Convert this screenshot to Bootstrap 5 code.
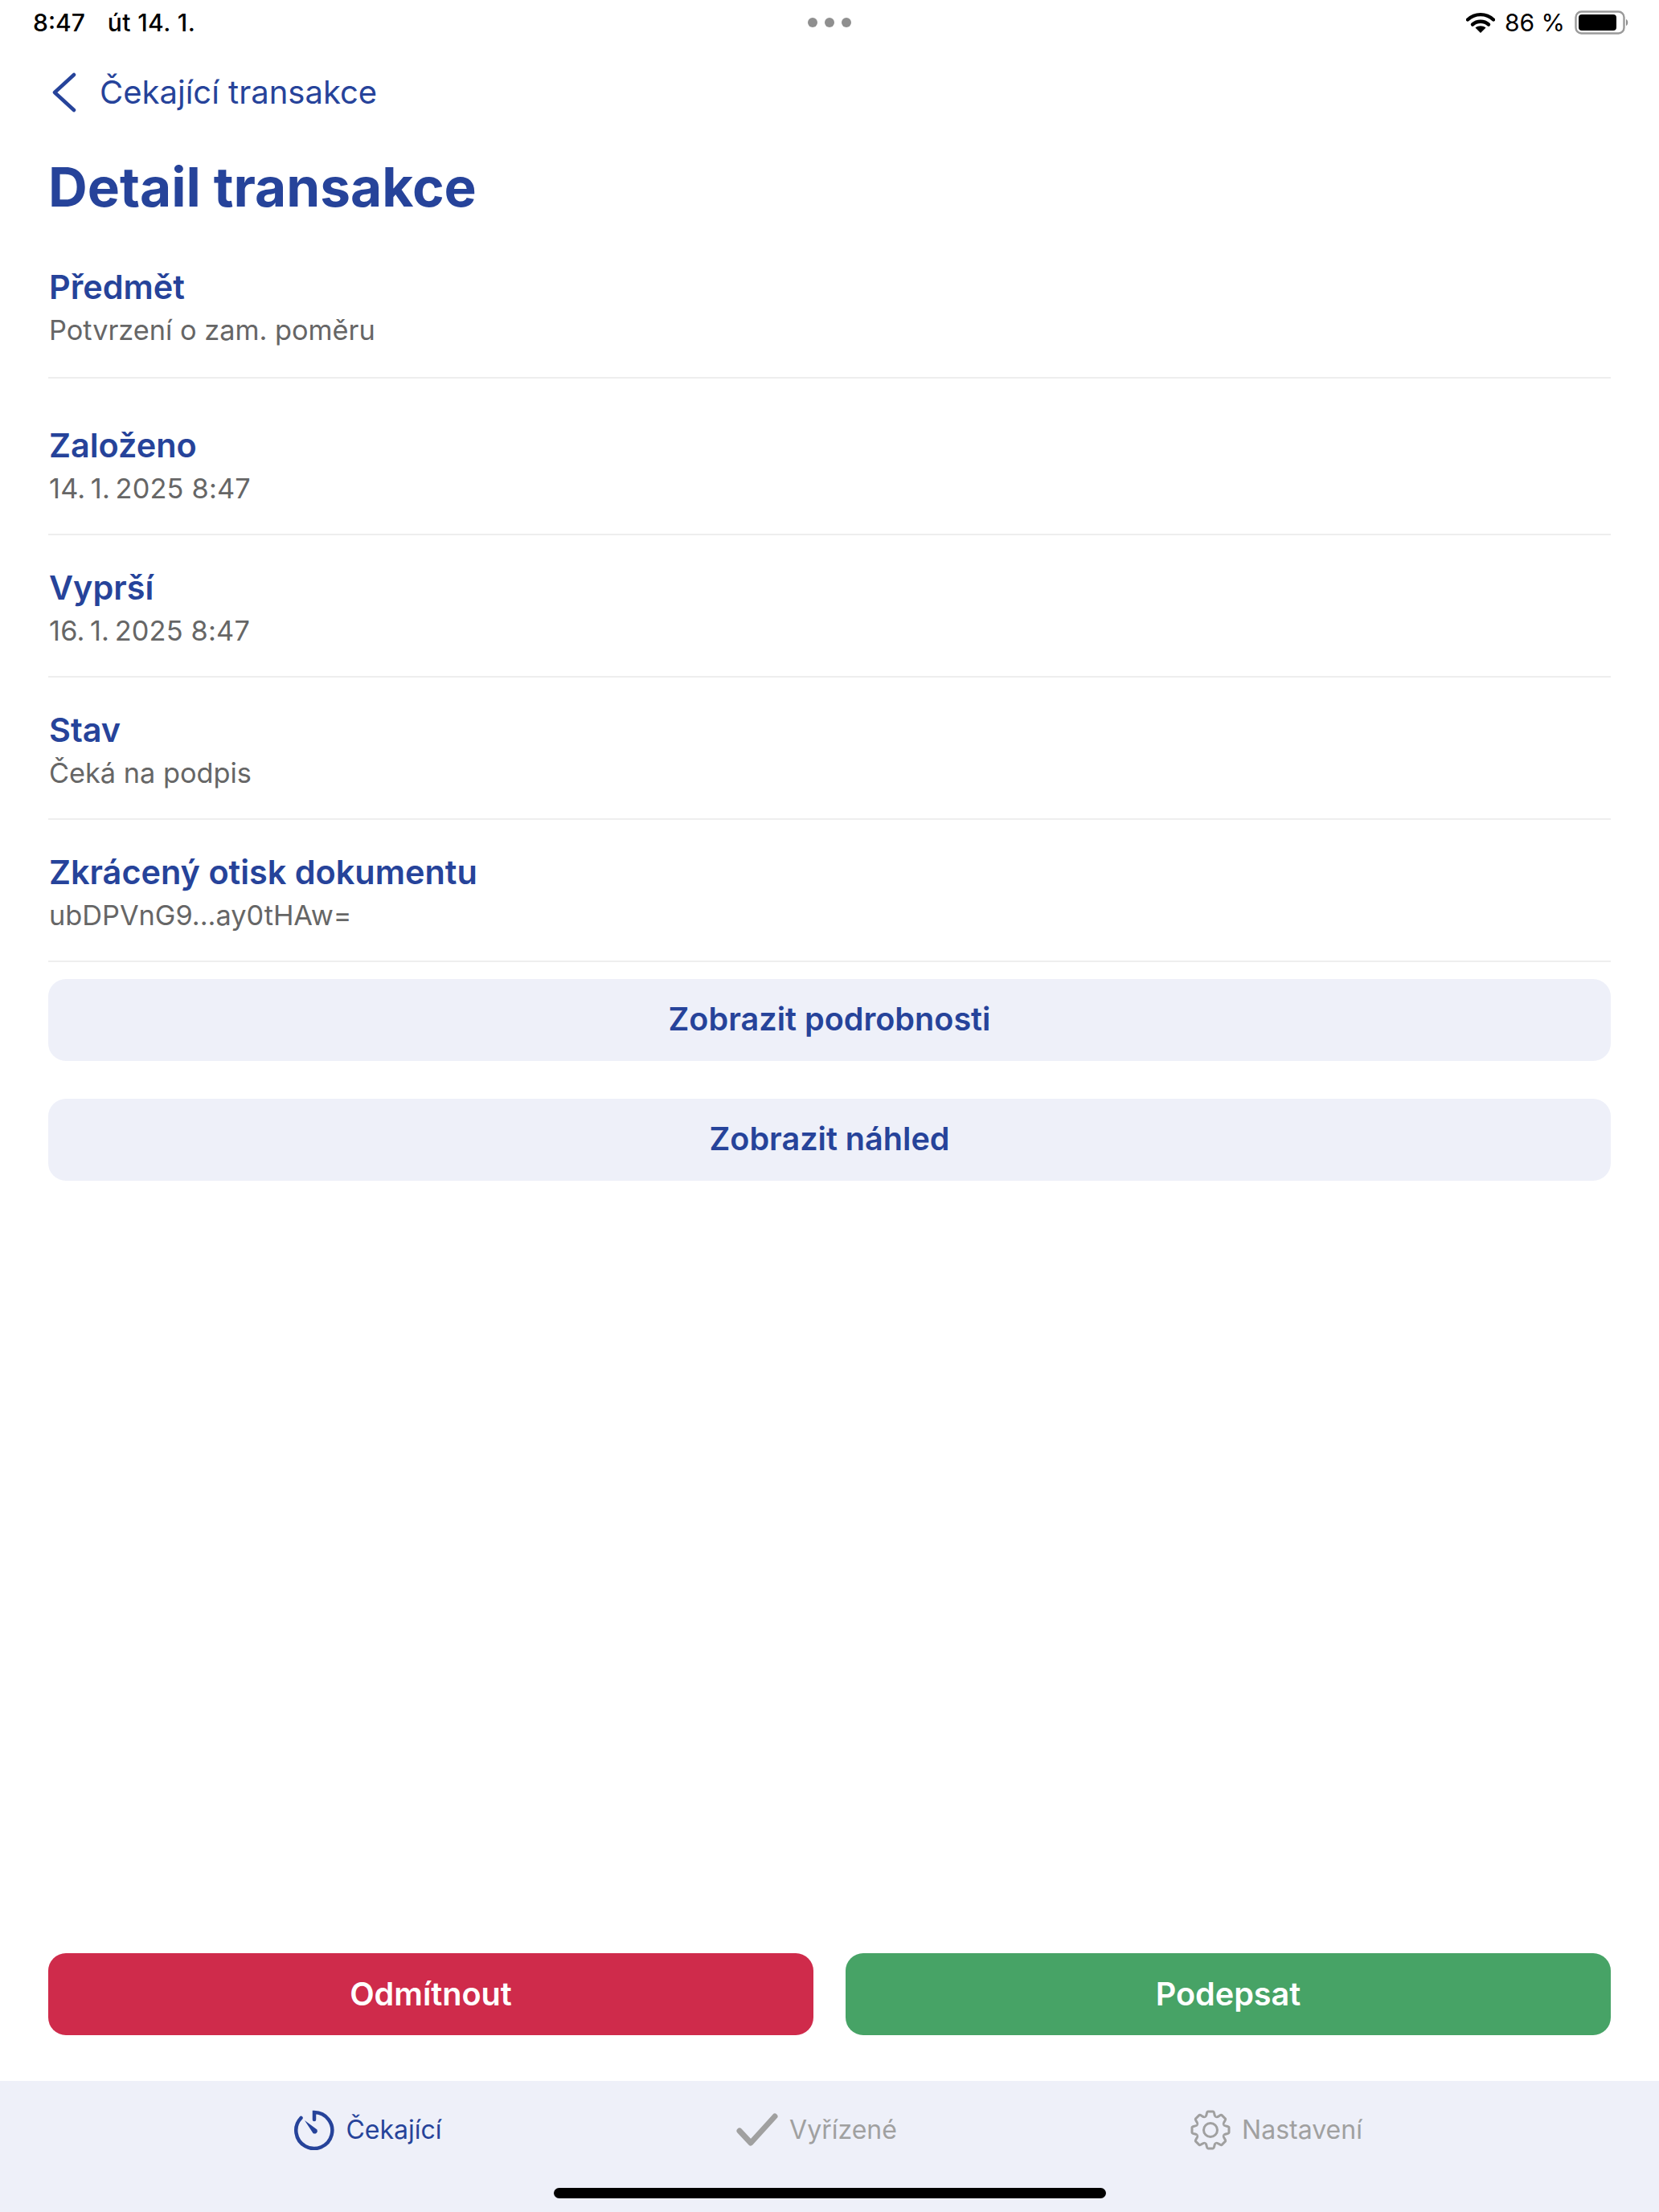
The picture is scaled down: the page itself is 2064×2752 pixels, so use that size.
<!DOCTYPE html>
<html lang="cs">
<head>
    <meta charset="UTF-8">
    <meta name="viewport" content="width=device-width, initial-scale=1.0">
    <title>Detail transakce</title>
    <link href="https://cdn.jsdelivr.net/npm/bootstrap@5.3.0/dist/css/bootstrap.min.css" rel="stylesheet">
    <style>
        body {
            font-family: Inter, "Liberation Sans", sans-serif;
            background: #fff;
            color: #26439a;
        }
        .app-screen {
            height: 2752px;
        }
        .status-bar {
            height: 56px;
            padding: 0 37px 0 41px;
            color: #000;
            font-size: 30px;
            font-weight: 500;
            line-height: 56px;
        }
        .status-date {
            margin-left: 28px;
            letter-spacing: .4px;
        }
        .status-dots {
            gap: 9px;
        }
        .status-dots i {
            display: block;
            width: 12px;
            height: 12px;
            border-radius: 50%;
            background: #8f8f8f;
        }
        .status-right {
            gap: 12px;
            font-weight: 400;
        }
        .back-link {
            height: 54px;
            margin-top: 32px;
            padding-left: 63px;
            gap: 27px;
            color: #26439a;
            font-size: 40px;
            text-decoration: none;
        }
        .page-title {
            margin: 51px 0 0 60px;
            color: #26439a;
            font-size: 67.5px;
            font-weight: 700;
            line-height: 80px;
        }
        .detail-list {
            margin: 0 60px;
        }
        .list-group-flush > .detail-row {
            height: 177px;
            padding: 40px 0 0 1px;
            border: 0;
            border-bottom: 2px solid #eeeeee;
            border-radius: 0;
        }
        .list-group-flush > .detail-row:first-child {
            height: 198px;
            padding-top: 59px;
        }
        .list-group-flush > .detail-row:nth-child(2) {
            height: 195px;
            padding-top: 58px;
        }
        .list-group-flush > .detail-row:last-child {
            border-bottom: 2px solid #eeeeee;
        }
        .detail-label {
            color: #26439a;
            font-size: 41.4px;
            font-weight: 600;
            line-height: 50px;
        }
        .detail-value {
            margin-top: 4px;
            color: #666666;
            font-size: 34.3px;
            line-height: 50px;
        }
        .date-value {
            letter-spacing: .2px;
        }
        .soft-btn {
            height: 102px;
            border: 0;
            border-radius: 22px;
            background: #eef0f9;
            color: #26439a;
            font-size: 39.6px;
            font-weight: 600;
        }
        .soft-btn:hover {
            background: #eef0f9;
            color: #26439a;
        }
        .soft-actions {
            margin: 21px 60px 0;
            gap: 47px;
        }
        .main-actions {
            margin: 0 60px 57px;
            gap: 40px;
        }
        .solid-btn {
            height: 102px;
            padding-top: 8px;
            border: 0;
            border-radius: 22px;
            color: #fff;
            font-size: 39.6px;
            font-weight: 600;
        }
        .btn-refuse, .btn-refuse:hover {
            background: #cf2b4b;
            color: #fff;
        }
        .btn-sign, .btn-sign:hover {
            background: #47a366;
            color: #fff;
        }
        .tab-strip {
            height: 163px;
            padding: 35px 18px 0 0;
            background: #eef0f9;
        }
        .tab-item {
            width: 565px;
            height: 52px;
            gap: 14px;
            color: #a0a0a0;
            font-size: 32px;
            text-decoration: none;
        }
        .tab-item.is-active {
            color: #26439a;
        }
        .tab-middle {
            padding-right: 14px;
        }
        .home-bar {
            left: 689px;
            bottom: 17px;
            width: 687px;
            height: 13px;
            border-radius: 7px;
            background: #000;
        }
    </style>
</head>
<body>
    <div class="app-screen d-flex flex-column position-relative overflow-hidden">

        <div class="status-bar d-flex justify-content-between align-items-center position-relative">
            <div><span>8:47</span><span class="status-date">út 14. 1.</span></div>
            <div class="status-dots d-flex position-absolute top-50 start-50 translate-middle"><i></i><i></i><i></i></div>
            <div class="status-right d-flex align-items-center">
                <svg width="36" height="26" viewBox="0 0 36 26">
                    <path d="M2 9.5C11 1 25 1 34 9.5" fill="none" stroke="#000" stroke-width="4.4" stroke-linecap="round"/>
                    <path d="M8 15.5C13.5 10.5 22.5 10.5 28 15.5" fill="none" stroke="#000" stroke-width="4.4" stroke-linecap="round"/>
                    <path d="M18 26L11.5 19.5C15 16.5 21 16.5 24.5 19.5Z" fill="#000"/>
                </svg>
                <span>86 %</span>
                <svg width="68" height="30" viewBox="0 0 68 30">
                    <rect x="1.5" y="1.5" width="60" height="27" rx="7" fill="none" stroke="#9a9a9a" stroke-width="2.4"/>
                    <rect x="5" y="5" width="47" height="20" rx="4" fill="#000"/>
                    <path d="M64 11C67 12 67 18 64 19Z" fill="#8f8f8f"/>
                </svg>
            </div>
        </div>

        <a href="#" class="back-link d-flex align-items-center">
            <svg width="34" height="50" viewBox="0 0 34 50">
                <path d="M29 3L5 25L29 47" fill="none" stroke="#26439a" stroke-width="4.5" stroke-linecap="round" stroke-linejoin="round"/>
            </svg>
            <span>Čekající transakce</span>
        </a>

        <h1 class="page-title">Detail transakce</h1>

        <div class="list-group list-group-flush detail-list">
            <div class="list-group-item detail-row">
                <div class="detail-label">Předmět</div>
                <div class="detail-value">Potvrzení o zam. poměru</div>
            </div>
            <div class="list-group-item detail-row">
                <div class="detail-label">Založeno</div>
                <div class="detail-value date-value">14.&#8201;1.&#8201;2025 8:47</div>
            </div>
            <div class="list-group-item detail-row">
                <div class="detail-label">Vyprší</div>
                <div class="detail-value date-value">16.&#8201;1.&#8201;2025 8:47</div>
            </div>
            <div class="list-group-item detail-row">
                <div class="detail-label">Stav</div>
                <div class="detail-value">Čeká na podpis</div>
            </div>
            <div class="list-group-item detail-row">
                <div class="detail-label">Zkrácený otisk dokumentu</div>
                <div class="detail-value">ubDPVnG9...ay0tHAw=</div>
            </div>
        </div>

        <div class="soft-actions d-flex flex-column">
            <button class="btn soft-btn w-100">Zobrazit podrobnosti</button>
            <button class="btn soft-btn w-100">Zobrazit náhled</button>
        </div>

        <div class="main-actions d-flex mt-auto">
            <button class="btn solid-btn btn-refuse flex-fill w-50">Odmítnout</button>
            <button class="btn solid-btn btn-sign flex-fill w-50">Podepsat</button>
        </div>

        <nav class="tab-strip d-flex justify-content-center align-items-start">
            <a href="#" class="tab-item is-active d-flex justify-content-center align-items-center">
                <svg width="50" height="50" viewBox="0 0 50 50">
                    <path d="M25 12V3A22.5 22.5 0 1 1 8.5 10" fill="none" stroke="#26439a" stroke-width="4.5" stroke-linecap="round"/>
                    <path d="M13 13L28.5 24.5A3.5 3.5 0 0 1 23.5 29Z" fill="#26439a"/>
                </svg>
                <span>Čekající</span>
            </a>
            <a href="#" class="tab-item tab-middle d-flex justify-content-center align-items-center">
                <svg width="52" height="42" viewBox="0 0 52 42">
                    <path d="M4 22L18 37L48 4" fill="none" stroke="#a0a0a0" stroke-width="7" stroke-linecap="round" stroke-linejoin="round"/>
                </svg>
                <span>Vyřízené</span>
            </a>
            <a href="#" class="tab-item d-flex justify-content-center align-items-center">
                <svg width="50" height="50" viewBox="0 0 50 50">
                    <defs>
                        <path id="gear-tooth" d="M18.1 8.4C21 8 19.5 2 22 2H28C30.5 2 29 8 31.9 8.4" fill="none" stroke="#a0a0a0" stroke-width="3"/>
                    </defs>
                    <use href="#gear-tooth"/>
                    <use href="#gear-tooth" transform="rotate(45 25 25)"/>
                    <use href="#gear-tooth" transform="rotate(90 25 25)"/>
                    <use href="#gear-tooth" transform="rotate(135 25 25)"/>
                    <use href="#gear-tooth" transform="rotate(180 25 25)"/>
                    <use href="#gear-tooth" transform="rotate(225 25 25)"/>
                    <use href="#gear-tooth" transform="rotate(270 25 25)"/>
                    <use href="#gear-tooth" transform="rotate(315 25 25)"/>
                    <circle cx="25" cy="25" r="8.5" fill="none" stroke="#a0a0a0" stroke-width="3"/>
                </svg>
                <span>Nastavení</span>
            </a>
        </nav>

        <div class="home-bar position-absolute"></div>
    </div>

    <script src="https://cdn.jsdelivr.net/npm/bootstrap@5.3.0/dist/js/bootstrap.bundle.min.js"></script>
</body>
</html>
